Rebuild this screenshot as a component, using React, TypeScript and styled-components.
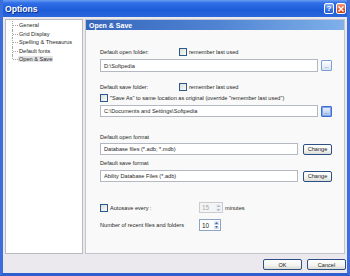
import styled, { createGlobalStyle } from 'styled-components';

const GlobalStyle = createGlobalStyle`
  html, body {
    margin: 0;
    padding: 0;
    background: #ebe9ed;
  }
  * {
    box-sizing: border-box;
  }
`;

const Window = styled.div`
  width: 350px;
  height: 276px;
  display: flex;
  flex-direction: column;
  background: #ebe9ed;
  border-left: 3px solid #3d6fdc;
  border-right: 3px solid #3d6fdc;
  border-bottom: 3px solid #2f5fcf;
  font-family: 'Liberation Sans', Arial, sans-serif;
  font-size: 5.6px;
  color: #262626;
  overflow: hidden;
`;

const TitleBar = styled.div`
  height: 17px;
  margin: 0 -3px;
  padding: 0 4px 0 5px;
  display: flex;
  align-items: center;
  justify-content: space-between;
  background: linear-gradient(180deg, #6a9df2 0%, #2f6ee6 18%, #1d5cd8 60%, #2a66dc 100%);
`;

const Title = styled.span`
  color: #fff;
  font-weight: bold;
  font-size: 8.6px;
  text-shadow: 1px 1px 0 #0b2f8a;
`;

const TitleButtons = styled.div`
  display: flex;
  gap: 2px;
`;

const CaptionButton = styled.div<{ $close?: boolean }>`
  width: 10px;
  height: 11px;
  border: 1px solid #fff;
  border-radius: 2px;
  display: flex;
  align-items: center;
  justify-content: center;
  color: #fff;
  font-weight: bold;
  font-size: 8px;
  background: ${({ $close }) =>
    $close
      ? 'linear-gradient(180deg, #f0a080 0%, #e0542a 60%, #c8401c 100%)'
      : 'linear-gradient(180deg, #8ab4f8 0%, #3a76e8 60%, #2a60d0 100%)'};
`;

const Body = styled.div`
  flex: 1;
  display: flex;
  gap: 2px;
  padding: 2px 0 0 2px;
`;

const TreePanel = styled.div`
  width: 78px;
  height: 235px;
  background: #fff;
  border: 1px solid #b9b9c0;
  padding: 1px 0 0 0;
`;

const TreeItem = styled.div<{ $last?: boolean }>`
  position: relative;
  height: 8.6px;
  line-height: 8.6px;
  padding-left: 12px;
  white-space: nowrap;

  &::before {
    content: '';
    position: absolute;
    left: 6px;
    top: 0;
    height: ${({ $last }) => ($last ? '4px' : '100%')};
    border-left: 1px dotted #a8a8a8;
  }
  &::after {
    content: '';
    position: absolute;
    left: 7px;
    top: 4px;
    width: 5px;
    border-top: 1px dotted #a8a8a8;
  }
`;

const TreeLabel = styled.span<{ $selected?: boolean }>`
  padding: 0 1px;
  background: ${({ $selected }) => ($selected ? '#e3e3e6' : 'transparent')};
`;

const Panel = styled.div`
  width: 260px;
  height: 235px;
  display: flex;
  flex-direction: column;
  background: #f9f9f9;
  border: 1px solid #c4c4cc;
`;

const PanelHeader = styled.div`
  height: 10px;
  display: flex;
  align-items: center;
  padding-left: 3px;
  color: #fff;
  font-weight: bold;
  font-size: 7px;
  background: linear-gradient(90deg, #3566bd 0%, #4f83d2 50%, #7fb0ea 100%);
`;

const Content = styled.div`
  padding: 0 0 0 14px;
  display: flex;
  flex-direction: column;
`;

const Row = styled.div<{ $mt: number; $h?: number }>`
  margin-top: ${({ $mt }) => $mt}px;
  height: ${({ $h }) => $h ?? 8}px;
  display: flex;
  align-items: center;
  white-space: nowrap;
`;

const LabelCol = styled.span<{ $w: number }>`
  width: ${({ $w }) => $w}px;
  flex: none;
  display: flex;
  align-items: center;
`;

const Check = styled.span`
  width: 8px;
  height: 8px;
  margin-right: 2px;
  flex: none;
  border: 1px solid #2b5a8c;
  background: linear-gradient(135deg, #dcdcd6 0%, #fbfbf9 100%);
`;

const Field = styled.div<{ $w: number }>`
  width: ${({ $w }) => $w}px;
  height: 100%;
  display: flex;
  align-items: center;
  padding-left: 3px;
  background: #fff;
  border: 1px solid #b4b8c2;
`;

const Browse = styled.div<{ $focus?: boolean }>`
  width: 11px;
  height: 11px;
  margin-left: 3px;
  border: 1px solid ${({ $focus }) => ($focus ? '#3d6fd0' : '#7a9fd6')};
  border-radius: 1px;
  display: flex;
  align-items: flex-end;
  justify-content: center;
  font-size: 5px;
  line-height: 7px;
  color: #3d4a66;
  background: ${({ $focus }) =>
    $focus
      ? 'linear-gradient(180deg, #eef3fc 0%, #a9c3ee 100%)'
      : 'linear-gradient(180deg, #ffffff 0%, #d5e2f6 100%)'};
  box-shadow: ${({ $focus }) => ($focus ? 'inset 0 0 0 1px #7fa4e8' : 'none')};
`;

const PushButton = styled.div<{ $w: number; $ml?: number }>`
  width: ${({ $w }) => $w}px;
  height: 11px;
  margin-left: ${({ $ml }) => $ml ?? 0}px;
  flex: none;
  display: flex;
  align-items: center;
  justify-content: center;
  border: 1px solid #2c4f86;
  border-radius: 2px;
  background: linear-gradient(180deg, #ffffff 0%, #f3f3ef 60%, #dcdcd6 100%);
  color: #1a1a1a;
`;

const Spinner = styled.div<{ $w: number; $disabled?: boolean }>`
  width: ${({ $w }) => $w}px;
  height: 100%;
  display: flex;
  align-items: center;
  justify-content: space-between;
  padding-left: 2px;
  margin-right: 2px;
  border: 1px solid ${({ $disabled }) => ($disabled ? '#c9ccd4' : '#8ea4c4')};
  background: ${({ $disabled }) => ($disabled ? '#f4f4f4' : '#fff')};
  color: ${({ $disabled }) => ($disabled ? '#a8a8a8' : '#1a1a1a')};
  font-size: 6.4px;
`;

const SpinArrows = styled.div<{ $disabled?: boolean }>`
  width: 7px;
  height: 100%;
  display: flex;
  flex-direction: column;
  gap: 1px;
  padding: 1px;
  opacity: ${({ $disabled }) => ($disabled ? 0.45 : 1)};
`;

const SpinHalf = styled.div`
  flex: 1;
  display: flex;
  align-items: center;
  justify-content: center;
  background: linear-gradient(180deg, #e6eefc 0%, #bcd0f0 100%);
  border-radius: 1px;
`;

const Footer = styled.div`
  height: 19px;
  display: flex;
  align-items: flex-start;
  justify-content: flex-end;
  gap: 5px;
  padding: 5px 1px 0 0;
`;

const Arrow = ({ up }: { up?: boolean }) => (
  <svg width="3" height="2" viewBox="0 0 3 2">
    <path d={up ? 'M0 2 L1.5 0 L3 2 Z' : 'M0 0 L1.5 2 L3 0 Z'} fill="#4d6185" />
  </svg>
);

const treeItems = ['General', 'Grid Display', 'Spelling & Thesaurus', 'Default fonts', 'Open & Save'];

export default function App() {
  return (
    <>
      <GlobalStyle />
      <Window>
        <TitleBar>
          <Title>Options</Title>
          <TitleButtons>
            <CaptionButton>?</CaptionButton>
            <CaptionButton $close>
              <svg width="6" height="6" viewBox="0 0 6 6">
                <path d="M0.5 0.5 L5.5 5.5 M5.5 0.5 L0.5 5.5" stroke="#fff" strokeWidth="1.4" />
              </svg>
            </CaptionButton>
          </TitleButtons>
        </TitleBar>

        <Body>
          <TreePanel>
            {treeItems.map((item, i) => (
              <TreeItem key={item} $last={i === treeItems.length - 1}>
                <TreeLabel $selected={i === treeItems.length - 1}>{item}</TreeLabel>
              </TreeItem>
            ))}
          </TreePanel>

          <Panel>
            <PanelHeader>Open &amp; Save</PanelHeader>
            <Content>
              <Row $mt={18}>
                <LabelCol $w={79}>Default open folder:</LabelCol>
                <Check />
                remember last used
              </Row>
              <Row $mt={3} $h={13}>
                <Field $w={218}>D:\Softpedia</Field>
                <Browse>...</Browse>
              </Row>

              <Row $mt={11}>
                <LabelCol $w={79}>Default save folder:</LabelCol>
                <Check />
                remember last used
              </Row>
              <Row $mt={3}>
                <Check />
                "Save As" to same location as original (override "remember last used")
              </Row>
              <Row $mt={3} $h={12}>
                <Field $w={218}>C:\Documents and Settings\Softpedia</Field>
                <Browse $focus>...</Browse>
              </Row>

              <Row $mt={16}>Default open format</Row>
              <Row $mt={2} $h={12}>
                <Field $w={198}>Database files (*.adb; *.mdb)</Field>
                <PushButton $w={29} $ml={5}>Change</PushButton>
              </Row>

              <Row $mt={4}>Default save format</Row>
              <Row $mt={3} $h={12}>
                <Field $w={198}>Ability Database Files (*.adb)</Field>
                <PushButton $w={29} $ml={5}>Change</PushButton>
              </Row>

              <Row $mt={20} $h={11}>
                <LabelCol $w={99}>
                  <Check />
                  Autosave every :
                </LabelCol>
                <Spinner $w={24} $disabled>
                  15
                  <SpinArrows $disabled>
                    <SpinHalf><Arrow up /></SpinHalf>
                    <SpinHalf><Arrow /></SpinHalf>
                  </SpinArrows>
                </Spinner>
                minutes
              </Row>
              <Row $mt={6} $h={12}>
                <LabelCol $w={99}>Number of recent files and folders</LabelCol>
                <Spinner $w={22}>
                  10
                  <SpinArrows>
                    <SpinHalf><Arrow up /></SpinHalf>
                    <SpinHalf><Arrow /></SpinHalf>
                  </SpinArrows>
                </Spinner>
              </Row>
            </Content>
          </Panel>
        </Body>

        <Footer>
          <PushButton $w={39}>OK</PushButton>
          <PushButton $w={39}>Cancel</PushButton>
        </Footer>
      </Window>
    </>
  );
}
